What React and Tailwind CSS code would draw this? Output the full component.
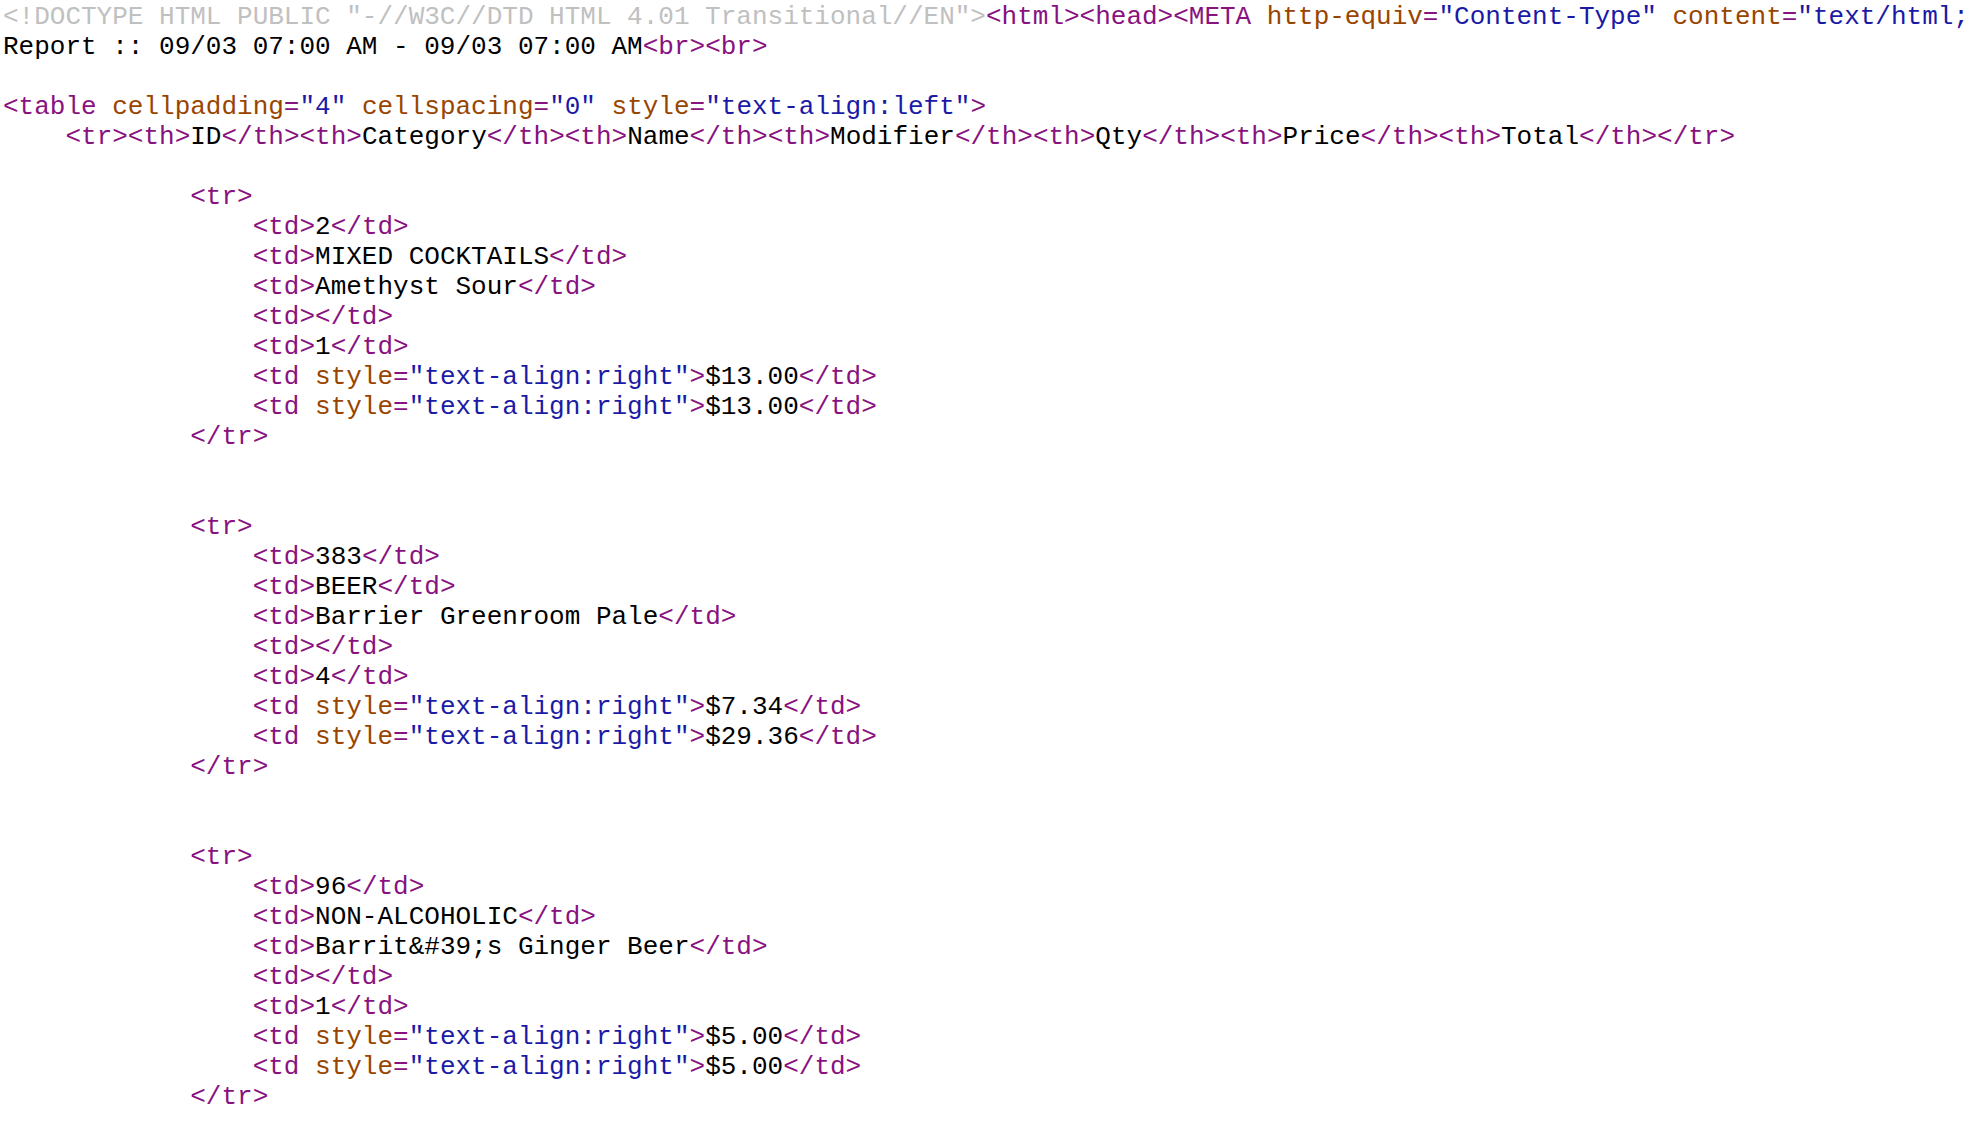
import React from 'react'

const ROWS = [
  { id: '2', cat: 'MIXED COCKTAILS', name: 'Amethyst Sour', qty: '1', price: '$13.00', total: '$13.00' },
  { id: '383', cat: 'BEER', name: 'Barrier Greenroom Pale', qty: '4', price: '$7.34', total: '$29.36' },
  { id: '96', cat: 'NON-ALCOHOLIC', name: 'Barrit&#39;s Ginger Beer', qty: '1', price: '$5.00', total: '$5.00' },
]

const T = ({ children }) => <span className="text-[#881280]">{children}</span>
const A = ({ children }) => <span className="text-[#994500]">{children}</span>
const V = ({ children }) => <span className="text-[#1a1aa6]">{children}</span>

function Line({ children }) {
  return <div className="h-[30px] leading-[30px] whitespace-pre">{children || ' '}</div>
}

function Cell({ children }) {
  return (
    <Line>
      {'                '}<T>&lt;td&gt;</T>{children}<T>&lt;/td&gt;</T>
    </Line>
  )
}

function RightCell({ children }) {
  return (
    <Line>
      {'                '}<T>&lt;td </T><A>style</A><T>=</T><V>"text-align:right"</V><T>&gt;</T>{children}<T>&lt;/td&gt;</T>
    </Line>
  )
}

function Row({ r }) {
  return (
    <>
      <Line>{'            '}<T>&lt;tr&gt;</T></Line>
      <Cell>{r.id}</Cell>
      <Cell>{r.cat}</Cell>
      <Cell>{r.name}</Cell>
      <Cell></Cell>
      <Cell>{r.qty}</Cell>
      <RightCell>{r.price}</RightCell>
      <RightCell>{r.total}</RightCell>
      <Line>{'            '}<T>&lt;/tr&gt;</T></Line>
    </>
  )
}

const HEADS = ['ID', 'Category', 'Name', 'Modifier', 'Qty', 'Price', 'Total']

export default function App() {
  return (
    <div className="w-[1980px] h-[1146px] overflow-hidden bg-white text-black pl-[3px] pt-[2px] text-[26px] font-['Liberation_Mono','Courier_New',monospace]">
      <Line>
        <span className="text-[#c0c0c0]">&lt;!DOCTYPE HTML PUBLIC "-//W3C//DTD HTML 4.01 Transitional//EN"&gt;</span>
        <T>&lt;html&gt;&lt;head&gt;&lt;META </T><A>http-equiv</A><T>=</T><V>"Content-Type"</V><T> </T><A>content</A><T>=</T><V>"text/html; charset=utf-8"</V><T>&gt;</T>
      </Line>
      <Line>
        Report :: 09/03 07:00 AM - 09/03 07:00 AM<T>&lt;br&gt;&lt;br&gt;</T>
      </Line>
      <Line />
      <Line>
        <T>&lt;table </T><A>cellpadding</A><T>=</T><V>"4"</V><T> </T><A>cellspacing</A><T>=</T><V>"0"</V><T> </T><A>style</A><T>=</T><V>"text-align:left"</V><T>&gt;</T>
      </Line>
      <Line>
        {'    '}<T>&lt;tr&gt;</T>
        {HEADS.map(h => (
          <React.Fragment key={h}><T>&lt;th&gt;</T>{h}<T>&lt;/th&gt;</T></React.Fragment>
        ))}
        <T>&lt;/tr&gt;</T>
      </Line>
      <Line />
      {ROWS.map((r, i) => (
        <React.Fragment key={r.id}>
          {i > 0 && <><Line /><Line /></>}
          <Row r={r} />
        </React.Fragment>
      ))}
      <Line />
      <Line />
    </div>
  )
}
